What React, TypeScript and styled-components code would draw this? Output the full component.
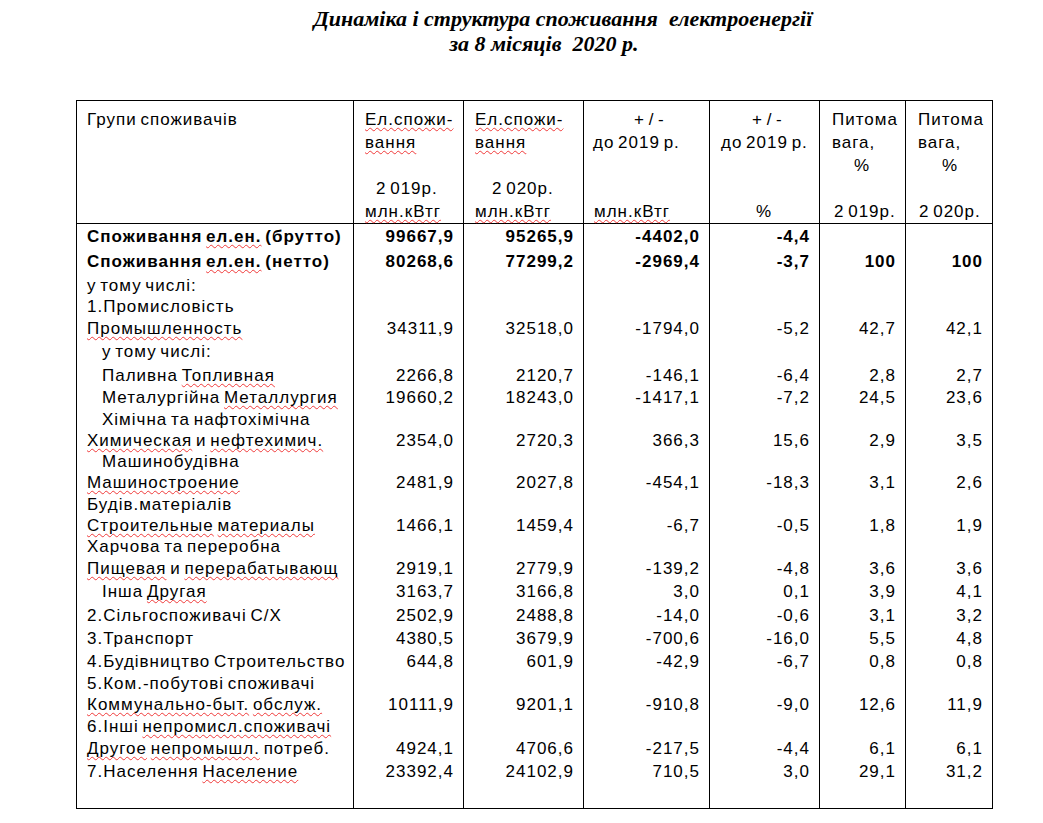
import React from "react";
import styled, { createGlobalStyle } from "styled-components";

const GlobalStyle = createGlobalStyle`
  html, body { margin: 0; padding: 0; background: #ffffff; }
  body { font-family: "Liberation Sans", Arial, sans-serif; color: #000; }
`;

const Page = styled.div`
  width: 1043px;
  min-height: 823px;
  padding-top: 6px;
  box-sizing: border-box;
`;

const Title = styled.div`
  display: flex;
  flex-direction: column;
  align-items: center;
  width: 874px;
  margin-left: 118px;
  font-family: "Liberation Serif", "Times New Roman", serif;
  font-weight: bold;
  font-style: italic;
  font-size: 22px;
  line-height: 25px;
`;

const TitleLine = styled.div<{ $shift: number }>`
  white-space: pre;
  margin-left: ${(p) => p.$shift}px;
`;

const Table = styled.div`
  margin: 44px 0 0 76px;
  width: 917px;
  border: 1px solid #000;
  box-sizing: border-box;
  font-size: 17px;
  letter-spacing: 1px;
  word-spacing: -2px;
`;

const COLS = "276px 110px 120px 126px 110px 86px 87px";

const HeadRow = styled.div`
  display: grid;
  grid-template-columns: ${COLS};
  border-bottom: 1px solid #000;
`;

const HeadCell = styled.div<{ $first?: boolean }>`
  border-left: ${(p) => (p.$first ? "none" : "1px solid #000")};
  padding-top: 7px;
  box-sizing: border-box;
`;

const HeadLine = styled.div<{ $indent: number }>`
  height: 23px;
  line-height: 23px;
  padding-left: ${(p) => p.$indent}px;
  white-space: pre;
`;

const Row = styled.div<{ $bold?: boolean }>`
  display: grid;
  grid-template-columns: ${COLS};
  font-weight: ${(p) => (p.$bold ? "bold" : "normal")};
`;

const LabelCell = styled.div`
  padding-left: 10px;
  white-space: pre;
`;

const LabelLine = styled.div<{ $h: number; $indent: boolean }>`
  height: ${(p) => p.$h}px;
  line-height: ${(p) => p.$h}px;
  padding-left: ${(p) => (p.$indent ? 15 : 0)}px;
`;

const ValueCell = styled.div<{ $lh: number }>`
  border-left: 1px solid #000;
  display: flex;
  flex-direction: column;
  justify-content: flex-end;
  align-items: flex-end;
  padding-right: 9px;
  line-height: ${(p) => p.$lh}px;
`;

const Filler = styled.div`
  display: grid;
  grid-template-columns: ${COLS};
  height: 24px;
`;

const FillerCell = styled.div<{ $first?: boolean }>`
  border-left: ${(p) => (p.$first ? "none" : "1px solid #000")};
`;

const Misspelled = styled.span`
  text-decoration: underline wavy #f03a3a;
  text-decoration-thickness: 1px;
  text-underline-offset: 2px;
  text-decoration-skip-ink: none;
`;

function Marked({ text }: { text: string }) {
  const parts = text.split(/(\{[^}]*\})/g).filter((s) => s.length > 0);
  return (
    <>
      {parts.map((p, i) =>
        p.startsWith("{") ? <Misspelled key={i}>{p.slice(1, -1)}</Misspelled> : <span key={i}>{p}</span>
      )}
    </>
  );
}

type HL = [string, number];
const header: HL[][] = [
  [["Групи споживачів", 10], ["", 0], ["", 0], ["", 0], ["", 0]],
  [["{Ел.спожи-}", 11], ["{вання}", 11], ["", 0], ["2 019р.", 22], ["{млн.кВтг}", 11]],
  [["{Ел.спожи-}", 11], ["{вання}", 11], ["", 0], ["2 020р.", 28], ["{млн.кВтг}", 11]],
  [["+ / -", 50], ["до 2019 р.", 9], ["", 0], ["", 0], ["{млн.кВтг}", 10]],
  [["+ / -", 42], ["до 2019 р.", 11], ["", 0], ["", 0], ["%", 46]],
  [["Питома", 12], ["вага,", 12], ["%", 34], ["", 0], ["2 019р.", 14]],
  [["Питома", 12], ["вага,", 12], ["%", 36], ["", 0], ["2 020р.", 13]],
];

type Line = { t: string; h: number; ind?: boolean };
type DataRow = { lines: Line[]; vals: string[]; bold?: boolean };

const rows: DataRow[] = [
  { lines: [{ t: "Споживання {ел.ен.} (брутто)", h: 26 }], vals: ["99667,9", "95265,9", "-4402,0", "-4,4", "", ""], bold: true },
  { lines: [{ t: "Споживання {ел.ен.} (нетто)", h: 24 }], vals: ["80268,6", "77299,2", "-2969,4", "-3,7", "100", "100"], bold: true },
  { lines: [{ t: "у тому числі:", h: 23 }], vals: ["", "", "", "", "", ""] },
  { lines: [{ t: "1.Промисловість", h: 20 }, { t: "{Промышленность}", h: 23 }], vals: ["34311,9", "32518,0", "-1794,0", "-5,2", "42,7", "42,1"] },
  { lines: [{ t: "у тому числі:", h: 24, ind: true }], vals: ["", "", "", "", "", ""] },
  { lines: [{ t: "Паливна {Топливная}", h: 23, ind: true }], vals: ["2266,8", "2120,7", "-146,1", "-6,4", "2,8", "2,7"] },
  { lines: [{ t: "Металургійна {Металлургия}", h: 22, ind: true }], vals: ["19660,2", "18243,0", "-1417,1", "-7,2", "24,5", "23,6"] },
  { lines: [{ t: "Хімічна та нафтохімічна", h: 21, ind: true }, { t: "{Химическая} и {нефтехимич.}", h: 21 }], vals: ["2354,0", "2720,3", "366,3", "15,6", "2,9", "3,5"] },
  { lines: [{ t: "Машинобудівна", h: 21, ind: true }, { t: "{Машиностроение}", h: 22 }], vals: ["2481,9", "2027,8", "-454,1", "-18,3", "3,1", "2,6"] },
  { lines: [{ t: "Будів.матеріалів", h: 21 }, { t: "{Строительные} {материалы}", h: 21 }], vals: ["1466,1", "1459,4", "-6,7", "-0,5", "1,8", "1,9"] },
  { lines: [{ t: "Харчова та переробна", h: 21 }, { t: "{Пищевая} и {перерабатывающ}", h: 23 }], vals: ["2919,1", "2779,9", "-139,2", "-4,8", "3,6", "3,6"] },
  { lines: [{ t: "Інша {Другая}", h: 24, ind: true }], vals: ["3163,7", "3166,8", "3,0", "0,1", "3,9", "4,1"] },
  { lines: [{ t: "2.Сільгоспоживачі С/Х", h: 23 }], vals: ["2502,9", "2488,8", "-14,0", "-0,6", "3,1", "3,2"] },
  { lines: [{ t: "3.Транспорт", h: 23 }], vals: ["4380,5", "3679,9", "-700,6", "-16,0", "5,5", "4,8"] },
  { lines: [{ t: "4.Будівництво Строительство", h: 23 }], vals: ["644,8", "601,9", "-42,9", "-6,7", "0,8", "0,8"] },
  { lines: [{ t: "5.Ком.-побутові споживачі", h: 21 }, { t: "{Коммунально-быт.} {обслуж.}", h: 22 }], vals: ["10111,9", "9201,1", "-910,8", "-9,0", "12,6", "11,9"] },
  { lines: [{ t: "6.Інші {непромисл.споживачі}", h: 21 }, { t: "{Другое} {непромышл.} потреб.", h: 23 }], vals: ["4924,1", "4706,6", "-217,5", "-4,4", "6,1", "6,1"] },
  { lines: [{ t: "7.Населення {Население}", h: 24 }], vals: ["23392,4", "24102,9", "710,5", "3,0", "29,1", "31,2"] },
];

export default function App() {
  return (
    <Page>
      <GlobalStyle />
      <Title>
        <TitleLine $shift={16}>Динаміка і структура споживання  електроенергії</TitleLine>
        <TitleLine $shift={-22}>за 8 місяців  2020 р.</TitleLine>
      </Title>
      <Table>
        <HeadRow>
          {header.map((col, ci) => (
            <HeadCell key={ci} $first={ci === 0}>
              {col.map(([t, ind], li) => (
                <HeadLine key={li} $indent={ind}>
                  <Marked text={t} />
                </HeadLine>
              ))}
            </HeadCell>
          ))}
        </HeadRow>
        {rows.map((r, ri) => {
          const last = r.lines[r.lines.length - 1].h;
          return (
            <Row key={ri} $bold={r.bold}>
              <LabelCell>
                {r.lines.map((l, li) => (
                  <LabelLine key={li} $h={l.h} $indent={!!l.ind}>
                    <Marked text={l.t} />
                  </LabelLine>
                ))}
              </LabelCell>
              {r.vals.map((v, vi) => (
                <ValueCell key={vi} $lh={last}>
                  {v}
                </ValueCell>
              ))}
            </Row>
          );
        })}
        <Filler>
          {[0, 1, 2, 3, 4, 5, 6].map((i) => (
            <FillerCell key={i} $first={i === 0} />
          ))}
        </Filler>
      </Table>
    </Page>
  );
}
